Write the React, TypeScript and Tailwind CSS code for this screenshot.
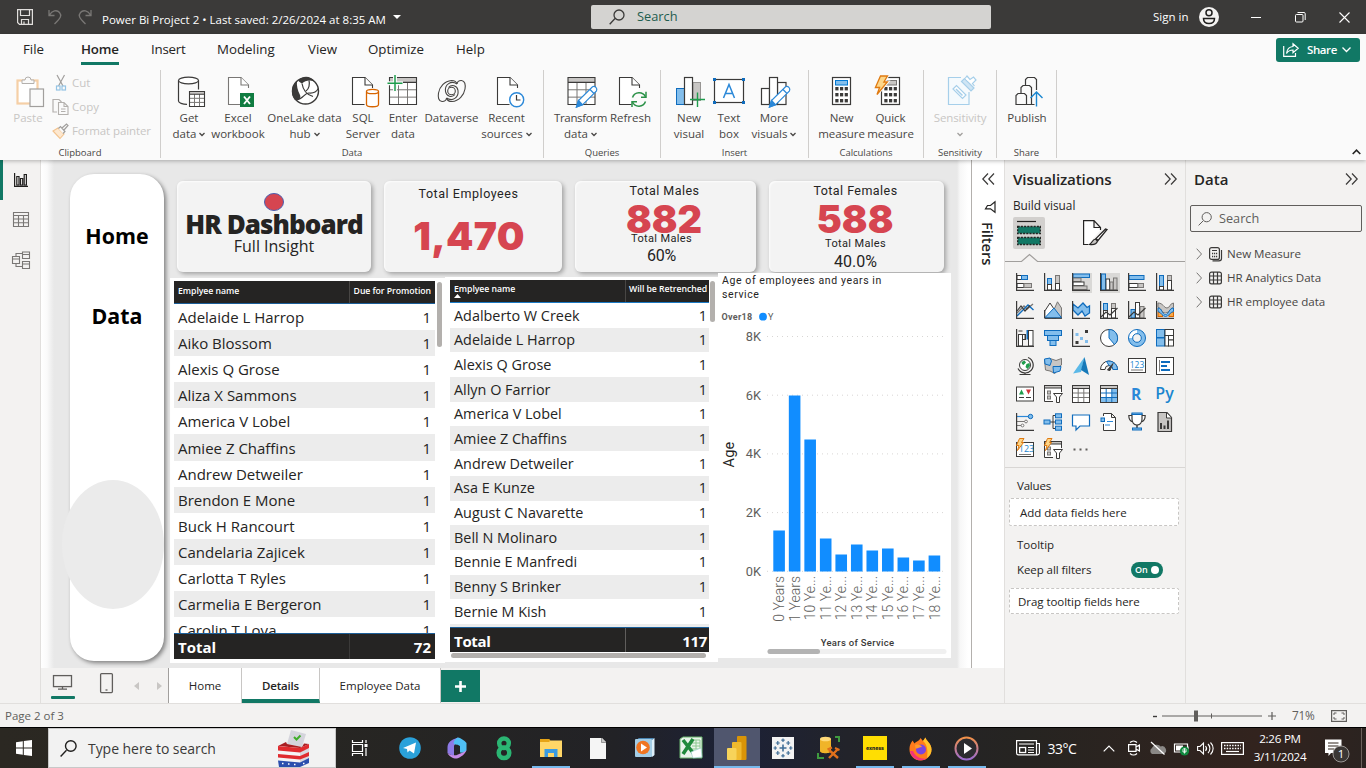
import React from "react";

type Kids = { children?: React.ReactNode };

const Svg = ({ w, h, children, className = "" }: { w: number; h: number; className?: string } & Kids) => (
  <svg width={w} height={h} viewBox={`0 0 ${w} ${h}`} fill="none" className={`shrink-0 overflow-visible ${className}`}>
    {children}
  </svg>
);

/* ---------- ribbon icons (32 x 32) ---------- */
const K = "#3b3a39";
const Doc = ({ x = 6.5, w = 20, color = K }: { x?: number; w?: number; color?: string }) => (
  <g stroke={color} strokeWidth="1.1" fill="#fff">
    <path d={`M${x + 12} 28.5H${x}V1.5H${x + w - 7.5}L${x + w} 9V12`} fill="#fff" />
    <path d={`M${x + w - 7.5} 1.5V9H${x + w}`} />
  </g>
);
const Grid = ({ x, y, s, n = 3 }: { x: number; y: number; s: number; n?: number }) => {
  const head = s / 5.5;
  const step = (s - head) / n;
  return (
    <g>
      <rect x={x} y={y} width={s} height={s} fill="#fff" />
      <rect x={x} y={y} width={s} height={head} fill="#c8c6c4" />
      {Array.from({ length: n - 1 }, (_, i) => (
        <path
          key={i}
          stroke="#797775"
          d={`M${x + ((i + 1) * s) / n} ${y + head}V${y + s}M${x} ${y + head + (i + 1) * step}H${x + s}`}
        />
      ))}
      <path stroke={K} strokeWidth="1.1" d={`M${x} ${y}h${s}v${s}h${-s}zM${x} ${y + head}h${s}`} />
    </g>
  );
};
const Pencil = () => (
  <g stroke="#2b88d8" strokeWidth="1.2">
    <path d="M11.5 31L13.5 24.5L27.5 10.8a3 3 0 0 1 4 4L17.5 28.8Z" fill="#fff" />
    <path d="M11.5 31L13.5 24.5L17.5 28.8Z" fill="#2b88d8" />
    <path d="M25 13.5l4 4" />
  </g>
);
const CalcBody = ({ display }: { display: string }) => (
  <g>
    <rect x="6.5" y="1.5" width="18" height="27" fill="#fff" stroke={K} strokeWidth="1.2" />
    <rect x="9.5" y="4.5" width="12" height="4.5" fill={display} stroke={display === "#c8c6c4" ? "#797775" : "#0078d4"} />
    {[11, 17, 23].map((y) => [9.3, 14, 18.7].map((x) => <rect key={`${x}-${y}`} x={x} y={y} width="3.2" height="3.4" fill={K} />))}
  </g>
);
const BOLT = "M5.5 0H12.5L8.9 6H12.4L2 18.5L4.6 11.5H0.4Z";

const ribbonIcons: Record<string, React.ReactNode> = {
  get: (
    <g transform="translate(2.5 0)">
      <g stroke={K} strokeWidth="1.2">
        <path d="M3 4.5V25c0 1.8 4 3.3 8.5 3.3M23 4.5V13.5" />
        <ellipse cx="13" cy="4.5" rx="10" ry="3.3" fill="#fff" />
      </g>
      <Grid x={14} y={15.5} s={15} />
    </g>
  ),
  excel: (
    <>
      <Doc color="#797775" />
      <rect x="18" y="17" width="14" height="14" fill="#107c41" />
      <path d="M22 20.5L28 28M28 20.5L22 28" stroke="#fff" strokeWidth="1.9" />
    </>
  ),
  onelake: (
    <>
      <circle cx="16.5" cy="15" r="13" fill="#fff" stroke={K} strokeWidth="1.4" />
      <path d="M8 5A13.5 13.5 0 0 0 5.500 23.5C9.5 25 12.500 23 11 19C8.500 14 7.5 10 8 5Z" fill={K} />
      <path d="M9.500 4.5C13 -.5 22 -.5 25.500 5.500C21 3.800 16 4.5 13 7.5C11 6.5 10 5.800 9.500 4.500Z" fill={K} />
      <path d="M13 7.5C14 14 17 18.500 24 20.500M6.5 23.500C14 24.500 15 16.5 20 17C24 17.500 27 16.500 29.300 12.500M20 4.5C21 8 20 13 17 15" stroke={K} strokeWidth="1.2" />
    </>
  ),
  sql: (
    <>
      <Doc x={5.5} />
      <g stroke="#d86500" strokeWidth="1.3" fill="#fff">
        <path d="M19.5 15.5V28.5c0 3 12 3 12 0V15.5" />
        <ellipse cx="25.5" cy="15.5" rx="6" ry="2.2" />
      </g>
    </>
  ),
  enter: (
    <>
      <Grid x={2.5} y={1.5} s={27} />
      <path d="M8 -1V15.5M0 7.2H16" stroke="#fafafa" strokeWidth="4" />
      <path d="M8 -1V15M0.5 7.2H15.5" stroke="#1f9d4d" strokeWidth="1.5" />
    </>
  ),
  dataverse: (
    <g stroke="#484644" strokeWidth="1.1">
      <circle cx="15.500" cy="15" r="3.800" />
      <path d="M21 8C15 4 8.500 8.500 9.500 15.500C10.300 20.500 16 22 19 18.500" />
      <path d="M10.500 22C16.500 26 23 21.500 22 14.500C21.200 9.500 15.500 8 12.500 11.500" />
      <path d="M21 8C21 6 23 4.300 25.500 4.500C29 5 29.700 8.500 29 13C28 19 23 25 16 25.500C13 25.500 11 24 10.500 22" />
      <path d="M10.500 22C10.500 24 8.500 25.700 6 25.500C2.500 25 1.800 21.500 2.500 17C3.500 11 8.500 5 15.500 4.500C18.500 4.500 20.500 6 21 8" />
    </g>
  ),
  recent: (
    <>
      <Doc />
      <circle cx="25.7" cy="23.7" r="7" fill="#fff" stroke="#2b88d8" strokeWidth="1.4" />
      <path d="M25.5 19V24H29.5" stroke={K} strokeWidth="1.2" />
    </>
  ),
  transform: (
    <>
      <Grid x={3} y={1.5} s={27} />
      <Pencil />
    </>
  ),
  refresh: (
    <>
      <Doc x={4.5} />
      <circle cx="24" cy="23.5" r="8.5" fill="#fafafa" />
      <g stroke="#2a9147" strokeWidth="1.5">
        <path d="M17.5 21.5A7 7 0 0 1 30.5 21M30.5 25.5A7 7 0 0 1 17.5 26" />
        <path d="M31 15.8V21.2H26M17 31V25.8H22" />
      </g>
    </>
  ),
  newvisual: (
    <>
      <rect x="3.5" y="12.5" width="8" height="16" fill="#83beec" stroke="#0f6cbd" />
      <rect x="20" y="6.5" width="7.5" height="18" fill="#c8c6c4" stroke="#979593" />
      <rect x="11.5" y="1.5" width="8" height="27" fill="#fff" stroke={K} strokeWidth="1.2" />
      <path d="M24.5 16.5V31M17 23.5H32" stroke="#1f9d4d" strokeWidth="1.4" />
    </>
  ),
  textbox: (
    <>
      <rect x="1.5" y="3.5" width="29" height="23" fill="#fff" stroke={K} strokeWidth="1.2" />
      {[0, 29].map((x) => [2, 25].map((y) => <rect key={`${x}-${y}`} x={x} y={y} width="3" height="3" fill="#0f6cbd" />))}
      <path d="M10.5 22L16 8.5L21.5 22M12.2 17.5H19.8" stroke="#2b88d8" strokeWidth="1.5" />
    </>
  ),
  more: (
    <>
      <g stroke={K} strokeWidth="1.2" fill="#fff">
        <rect x="3.5" y="12.5" width="8" height="16" />
        <rect x="19.5" y="6.5" width="8.5" height="22" />
        <rect x="11.5" y="1.5" width="8" height="27" />
      </g>
      <Pencil />
    </>
  ),
  measure: <CalcBody display="#83beec" />,
  quick: (
    <>
      <CalcBody display="#c8c6c4" />
      <path d={BOLT} fill="#ffd68a" stroke="#fafafa" strokeWidth="3" />
      <path d={BOLT} fill="#fcd68a" stroke="#e07a10" strokeWidth="1.3" />
    </>
  ),
  sensitivity: (
    <g stroke="#a6cfea" strokeWidth="1.2">
      <path d="M17 1.5H4.5V28.5H25V16" fill="#f5fafd" />
      <path d="M9 13L12.5 9.5L22 19L18.5 22.5Z" fill="#fff" />
      <path d="M12 13l6.5 6.5" strokeWidth="1.5" />
      <path d="M17.5 5.5L20.5 2.5L30 12L27 15Z" fill="#cfe5f4" />
      <path d="M21 2.500L23 0L26 3.5L29.5 1L32 4L28.5 7.5L30.5 10" fill="#fff" />
    </g>
  ),
  publish: (
    <>
      <g stroke={K} strokeWidth="1.2" fill="#fafafa">
        <path d="M14.5 28.5V3.5l2-2H23.5l2 2V14M25 28.5H14.5" />
        <path d="M10 28.5V11.5l2-2H18.5l2 2V28.5Z" />
        <path d="M5 28.5V19.5l2-2H13.5l2 2V28.5Z" />
      </g>
      <path d="M25.5 31V16" stroke="#fafafa" strokeWidth="4" />
      <path d="M25.5 30.5V16M19.5 22L25.5 16L31.5 22" stroke="#1a86cf" strokeWidth="1.4" />
    </>
  ),
};

const Caret = ({ className = "ml-[3px]" }: { className?: string }) => (
  <Svg w={6} h={5} className={`inline-block ${className}`}>
    <path d="M.5 1L3 3.5L5.5 1" stroke="currentColor" strokeWidth="1.3" />
  </Svg>
);

const RB = ({ icon, l1, l2, caret, cls, muted }: { icon: string; l1: string; l2?: string; caret?: boolean; cls: string; muted?: boolean }) => (
  <div className={`flex shrink-0 flex-col items-center text-[11.5px] leading-4 whitespace-nowrap ${muted ? "text-[#c8c6c4]" : "text-[#484644]"} ${cls}`}>
    <Svg w={32} h={32}>{ribbonIcons[icon]}</Svg>
    <div className={`mt-[2px] flex h-4 justify-center ${l1 === "Transform" ? "tracking-[-0.35px]" : ""}`}>{l1}</div>
    <div className="flex h-4 items-center justify-center">
      {l2}
      {caret && <Caret className={l2 ? "ml-[3px]" : "text-[#a19f9d]"} />}
    </div>
  </div>
);

const Group = ({ label, cls, children }: { label: string; cls: string } & Kids) => (
  <div className={`flex h-[88px] shrink-0 flex-col border-r border-[#d0cecc] ${cls}`}>
    <div className="flex h-[76px] shrink-0 pt-[6px]">{children}</div>
    <div className="shrink-0 text-center text-[9.5px] leading-[14px] tracking-[-0.05px] text-[#484644]">{label}</div>
  </div>
);

const tabs = [
  ["File", "w-[58px]"],
  ["Home", "w-[70px]"],
  ["Insert", "w-[66px]"],
  ["Modeling", "w-[91px]"],
  ["View", "w-[60px]"],
  ["Optimize", "w-[88px]"],
  ["Help", "w-[60px]"],
];

const TitleBar = () => (
  <div className="flex h-[34px] items-center bg-[#3b3a39] text-[12px] text-white">
    <div className="flex w-[102px] items-center pl-[17px]">
      <Svg w={16} h={16}>
        <g stroke="#e1dfdd" strokeWidth="1.2">
          <path d="M.6 .6H15.4V15.4H2.5L.6 13.5Z" />
          <path d="M3.5 1V6.5H12.5V1M4.5 15V10.5H11.5V15M7 12.5V15" />
        </g>
      </Svg>
      <Svg w={14} h={16} className="ml-[15px]">
        <path d="M1 1V6.5H6.5M1.5 6C4 1.5 9 .5 11.5 3.5C14 6.5 13 8.5 6.5 15" stroke="#797775" strokeWidth="1.3" />
      </Svg>
      <Svg w={14} h={16} className="ml-[16px]">
        <path d="M13 1V6.5H7.5M12.5 6C10 1.5 5 .5 2.5 3.5C0 6.5 1 8.5 7.5 15" stroke="#797775" strokeWidth="1.3" />
      </Svg>
    </div>
    <div className="w-[284px] pt-[6px] text-[11.5px] whitespace-nowrap">Power Bi Project 2 • Last saved: 2/26/2024 at 8:35 AM</div>
    <Svg w={8} h={4} className="ml-[7px]"><path d="M0 0H8L4 4Z" fill="#fff" /></Svg>
    <div className="ml-[190px] flex h-6 w-[400px] items-center rounded-[2px] bg-[#d4d3d1] text-[12.8px] text-[#1e5c4e]">
      <Svg w={16} h={16} className="mr-[12px] ml-[18px]">
        <path d="M.7 15.3L6 9.5" stroke="#3b3a39" strokeWidth="1.3" />
        <circle cx="10" cy="6" r="5" stroke="#3b3a39" strokeWidth="1.3" />
      </Svg>
      Search
    </div>
    <div className="ml-[162px] w-[46px] text-[11.5px] whitespace-nowrap">Sign in</div>
    <Svg w={20} h={20} className="mt-[-1px]">
      <circle cx="10" cy="10" r="10" fill="#f3f2f1" />
      <circle cx="10" cy="5.7" r="3" stroke="#201f1e" strokeWidth="1.5" />
      <path d="M4.5 11.5H15.5C15.5 14.5 13.5 16.5 10 16.5S4.5 14.5 4.5 11.5Z" stroke="#201f1e" strokeWidth="1.5" />
    </Svg>
    <Svg w={10} h={12} className="ml-[32px]"><path d="M0 6.5H10" stroke="#fff" /></Svg>
    <Svg w={11} h={11} className="mt-px ml-[34px]">
      <rect x=".5" y="2.5" width="7.5" height="7.5" rx="1" stroke="#fff" />
      <path d="M2.5 .5H9a1.200 1.200 0 0 1 1.200 1.200V8" stroke="#fff" />
    </Svg>
    <Svg w={11} h={11} className="mt-px ml-[33px]"><path d="M.5 .5L10.5 10.5M10.5 .5L.5 10.5" stroke="#fff" strokeWidth="1.1" /></Svg>
  </div>
);

const Ribbon = () => (
  <div className="relative z-10 h-[126px] bg-[#fafafa] shadow-[0_1px_4px_rgba(0,0,0,0.28)]">
    <div className="flex h-8 items-center">
      <div className="flex flex-1 pl-[23px] text-[13.3px] text-[#252423]">
        {tabs.map(([t, w]) => (
          <div key={t} className={`relative flex h-8 items-center ${w}`}>
            {t === "Home" ? (
              <>
                <span className="font-semibold tracking-[-0.2px]">Home</span>
                <i className="absolute bottom-[1px] left-0 h-[3px] w-[38px] bg-[#117865]" />
              </>
            ) : (
              <span className={t === "Insert" ? "tracking-[-0.2px]" : ""}>{t}</span>
            )}
          </div>
        ))}
      </div>
      <div className="mr-[6px] flex h-6 w-[84px] items-center rounded-[3px] bg-[#117865] text-[11.5px] font-semibold text-white">
        <Svg w={16} h={14} className="mr-[8px] ml-[7px]">
          <g stroke="#fff" strokeWidth="1.2">
            <path d="M.7 3V13.3H12.5V10" />
            <path d="M10 .7L15.2 5.2L10 9.7V7C7 7 5 8 3.5 10.5C4 6.5 6 3.8 10 3.5Z" />
          </g>
        </Svg>
        <span className="tracking-[-0.4px]">Share</span>
        <Svg w={9} h={6} className="ml-[5px]"><path d="M.5 .5L4.5 4.5L8.5 .5" stroke="#fff" strokeWidth="1.3" /></Svg>
      </div>
    </div>
    <div className="flex h-[92px] items-start pt-[4px]">
      <div className="flex h-[88px] w-[161px] flex-col border-r border-[#d0cecc] text-[#c8c6c4]">
        <div className="flex h-[76px] shrink-0 text-[11.5px]">
          <div className="ml-[12px] flex w-8 flex-col items-center pt-[6px] leading-4">
            <Svg w={32} h={32}>
              <rect x="5.5" y="4.5" width="20" height="23" fill="#fff" stroke="#f5cfa6" strokeWidth="2.2" />
              <path d="M10 7.5V4H13a3 3 0 0 1 6 0h3v3.5Z" fill="#fafafa" stroke="#b3b0ad" />
              <rect x="18" y="13" width="13.5" height="17.5" fill="#fafafa" stroke="#a19f9d" strokeWidth="1.2" />
            </Svg>
            <span className="mt-[2px]">Paste</span>
          </div>
          <div className="ml-[8px] flex flex-col pt-px">
            <div className="flex h-6 items-center gap-[3px]">
              <Svg w={17} h={16}>
                <path d="M5 0L11 11M12.5 0L6.5 11" stroke="#a19f9d" strokeWidth="1.2" />
                <rect x="4.5" y="11" width="3.5" height="4" stroke="#94c4e4" strokeWidth="1.2" />
                <rect x="10" y="11" width="3.5" height="4" stroke="#94c4e4" strokeWidth="1.2" />
              </Svg>
              Cut
            </div>
            <div className="flex h-6 items-center gap-[3px]">
              <Svg w={17} h={16}>
                <path d="M5 13H1V.5H7L9.5 3" stroke="#b3b0ad" strokeWidth="1.2" />
                <path d="M6.5 3.5H12L16 7.5V15.5H6.5ZM12 3.5V7.5H16M9 10H13.5M9 12.5H13.5" stroke="#b3b0ad" strokeWidth="1.1" fill="#fafafa" />
              </Svg>
              Copy
            </div>
            <div className="flex h-6 items-center gap-[3px] tracking-[-0.1px] whitespace-nowrap">
              <Svg w={17} h={15}>
                <path d="M1 7L6 4L12 10L8 14.5Z" fill="#fde8d0" stroke="#f3c38e" strokeWidth="1.1" />
                <path d="M6.5 4.5L8.5 2.5L13 7.5L11 9.5M10 4L14.5 0L16 1.5L12 6" stroke="#a19f9d" strokeWidth="1.2" fill="#fafafa" />
              </Svg>
              Format painter
            </div>
          </div>
        </div>
        <div className="shrink-0 text-center text-[9.5px] leading-[14px] text-[#484644]">Clipboard</div>
      </div>
      <Group label="Data" cls="w-[383px]">
        <RB icon="get" l1="Get" l2="data" caret cls="ml-[4px] w-[48px]" />
        <RB icon="excel" l1="Excel" l2="workbook" cls="w-[50px]" />
        <RB icon="onelake" l1="OneLake data" l2="hub" caret cls="w-[83px]" />
        <RB icon="sql" l1="SQL" l2="Server" cls="w-[34px]" />
        <RB icon="enter" l1="Enter" l2="data" cls="w-[46px]" />
        <RB icon="dataverse" l1="Dataverse" cls="w-[51px]" />
        <RB icon="recent" l1="Recent" l2="sources" caret cls="w-[59px]" />
      </Group>
      <Group label="Queries" cls="w-[117px]">
        <RB icon="transform" l1="Transform" l2="data" caret cls="ml-[8px] w-[57px]" />
        <RB icon="refresh" l1="Refresh" cls="w-[43px]" />
      </Group>
      <Group label="Insert" cls="w-[148px]">
        <RB icon="newvisual" l1="New" l2="visual" cls="ml-[8px] w-[40px]" />
        <RB icon="textbox" l1="Text" l2="box" cls="w-[40px]" />
        <RB icon="more" l1="More" l2="visuals" caret cls="w-[50px]" />
      </Group>
      <Group label="Calculations" cls="w-[115px]">
        <RB icon="measure" l1="New" l2="measure" cls="ml-[8px] w-[49px] tracking-[-0.1px]" />
        <RB icon="quick" l1="Quick" l2="measure" cls="w-[49px] tracking-[-0.1px]" />
      </Group>
      <Group label="Sensitivity" cls="w-[73px]">
        <RB icon="sensitivity" l1="Sensitivity" caret muted cls="w-[72px] tracking-[-0.1px]" />
      </Group>
      <Group label="Share" cls="w-[60px]">
        <RB icon="publish" l1="Publish" cls="w-[60px]" />
      </Group>
      <Svg w={9} h={6} className="mt-[79px] mr-[5px] ml-auto"><path d="M.7 5L4.5 1.2L8.3 5" stroke="#252423" strokeWidth="1.6" /></Svg>
    </div>
  </div>
);

const NavRail = () => (
  <div className="flex w-[41px] shrink-0 flex-col border-r border-[#e1dfdd] bg-[#f3f2f1]">
    <div className="flex h-10 items-center border-l-3 border-[#117865] pl-[11px]">
      <Svg w={14} h={14}>
        <path d="M.6 0V13.4H14M2.8 12V3.5H5V12ZM6.5 12V5.5H8.7V12ZM10.2 12V1.5H12.4V12Z" stroke="#201f1e" strokeWidth="1.2" />
      </Svg>
    </div>
    <div className="flex h-10 items-center pb-px pl-[13px]">
      <Svg w={16} h={15}>
        <path d="M.5 .5H15.5V14.5H.5ZM.5 3.5H15.5M.5 7H15.5M.5 10.7H15.5M5.5 3.5V14.5M10.5 3.5V14.5" stroke="#797775" strokeWidth="1.1" />
      </Svg>
    </div>
    <div className="flex h-10 items-center pl-[12px]">
      <Svg w={18} h={18}>
        <path d="M.5 5.5H7.5V12.5H.5ZM.5 8H7.5M10.5 1H17.5V7.5H10.5ZM10.5 3.5H17.5M10.5 10.5H17.5V17.5H10.5ZM10.5 13H17.5M4 5.5V2.5H10.5M4 12.5V15.5H10.5" stroke="#797775" strokeWidth="1.1" />
      </Svg>
    </div>
  </div>
);

const promoted = ["Adelaide L Harrop", "Aiko Blossom", "Alexis Q Grose", "Aliza X Sammons", "America V Lobel", "Amiee Z Chaffins", "Andrew Detweiler", "Brendon E Mone", "Buck H Rancourt", "Candelaria Zajicek", "Carlotta T Ryles", "Carmelia E Bergeron", "Carolin T Loya"];
const retrenched = ["Adalberto W Creek", "Adelaide L Harrop", "Alexis Q Grose", "Allyn O Farrior", "America V Lobel", "Amiee Z Chaffins", "Andrew Detweiler", "Asa E Kunze", "August C Navarette", "Bell N Molinaro", "Bennie E Manfredi", "Benny S Brinker", "Bernie M Kish"];

const CARD = "flex h-[91px] shrink-0 flex-col items-center rounded-[6px] bg-[#f3f3f3] text-[#252423] shadow-[2px_2px_4px_rgba(0,0,0,0.3),inset_1px_1px_2px_rgba(255,255,255,0.8)] whitespace-nowrap";
const DIN = "font-['Roboto',sans-serif]";
const BIG = "font-['Inter',sans-serif] font-black text-[#d64550]";

const bars = [41, 176, 132, 33, 17, 27, 21, 23, 14, 11, 16];
const years = ["0 Years", "1 Years", "10 Ye...", "11 Ye...", "12 Ye...", "13 Ye...", "14 Ye...", "15 Ye...", "16 Ye...", "17 Ye...", "18 Ye..."];

const Chart = () => (
  <div className="h-[385px] w-[233px] shrink-0 bg-white">
    <svg width="233" height="385" viewBox="0 0 233 385" className={DIN}>
      <g fill="#252423" fontSize="10.5" letterSpacing=".6">
        <text x="4" y="11">Age of employees and years in</text>
        <text x="4" y="25">service</text>
      </g>
      <text x="3.5" y="47" fontSize="9" fontWeight="700" fill="#605e5c" letterSpacing=".3">Over18</text>
      <circle cx="45" cy="43.7" r="3.9" fill="#118dff" />
      <text x="50" y="47" fontSize="9" fill="#605e5c">Y</text>
      {["8K", "6K", "4K", "2K", "0K"].map((t, i) => (
        <g key={t}>
          <path d={`M49 ${63.5 + i * 58.7}H228`} stroke="#d8d6d4" strokeDasharray="1 4" />
          <text x="43" y={68 + i * 58.7} textAnchor="end" fontSize="12.8" fill="#605e5c">{t}</text>
        </g>
      ))}
      {bars.map((h, i) => (
        <rect key={i} x={55.3 + i * 15.53} y={298.5 - h} width="11.6" height={h} fill="#118dff" />
      ))}
      {years.map((t, i) => (
        <text key={t} transform={`translate(${66.2 + i * 15.53} 303) rotate(-90)`} textAnchor="end" fontSize="14" fill="#605e5c" fontWeight="300">{t}</text>
      ))}
      <text transform="translate(16 181.5) rotate(-90)" textAnchor="middle" fontSize="14.5" letterSpacing=".3" fill="#252423">Age</text>
      <text x="139.5" y="373" textAnchor="middle" fontSize="9.5" fontWeight="500" fill="#3b3a39" letterSpacing=".3">Years of Service</text>
      <rect x="49.5" y="376" width="179" height="5" rx="2.5" fill="#f0f0f0" />
      <rect x="49.5" y="376" width="52.5" height="5" rx="2.5" fill="#b3b3b3" />
    </svg>
  </div>
);

const Canvas = () => (
  <div className="flex h-[508px] w-[930px] overflow-hidden bg-[linear-gradient(to_right,#ffffff_0px,#fafafa_6px,#e8e8e8_13px,#e8e8e8_916px,#f7f7f7_919px,#ffffff_927px)] pl-[29px]">
    <div className="relative mt-[14px] h-[487px] w-[94px] shrink-0 rounded-[24px] bg-white text-center text-[21.4px] font-bold text-black shadow-[2px_2px_4px_rgba(0,0,0,0.45)]">
      <div className="absolute top-[306px] left-[-8px] h-[129px] w-[102px] rounded-[50%] bg-[#ebebeb]" />
      <div className="mt-[47px] h-[30px] leading-[30px]">Home</div>
      <div className="mt-[50px] h-[30px] leading-[30px]">Data</div>
    </div>
    <div className="ml-[6px] flex flex-col">
      <div className="flex h-[113px] pt-[21px] pl-[7px]">
        <div className={`${CARD} w-[194px]`}>
          <Svg w={20} h={18} className="mt-[12px]"><ellipse cx="10" cy="9" rx="9.5" ry="8.5" fill="#d64550" stroke="#4a5fb0" /></Svg>
          <div className="h-[26px] text-[26px] leading-[26px] font-extrabold tracking-[-0.95px]">HR Dashboard</div>
          <div className="h-[18px] text-[16px] leading-[18px]">Full Insight</div>
        </div>
        <div className={`${CARD} ml-[13px] w-[178px]`}>
          <div className={`${DIN} mt-[5px] ml-[-9px] text-[12.5px] leading-4 tracking-[0.55px]`}>Total Employees</div>
          <div className={`${BIG} mt-[14px] ml-[-8px] text-[39px] leading-[40px] tracking-[0.3px]`}>1,470</div>
        </div>
        <div className={`${CARD} ml-[13px] w-[181px]`}>
          <div className={`${DIN} mt-[2px] ml-[-2px] text-[12.5px] leading-4 tracking-[0.45px]`}>Total Males</div>
          <div className={`${BIG} ml-[-3px] h-[32px] text-[38px] leading-[40px]`}>882</div>
          <div className={`${DIN} ml-[-8px] text-[11px] leading-[15px] tracking-[0.35px]`}>Total Males</div>
          <div className={`${DIN} ml-[-8px] text-[16px] leading-[20px] tracking-[-0.2px]`}>60%</div>
        </div>
        <div className={`${CARD} ml-[13px] w-[175px]`}>
          <div className={`${DIN} mt-[2px] ml-[-2px] text-[12.5px] leading-4 tracking-[0.45px]`}>Total Females</div>
          <div className={`${BIG} ml-[-3px] h-[37px] text-[38px] leading-[40px]`}>588</div>
          <div className={`${DIN} ml-[-2px] text-[11px] leading-[15px] tracking-[0.35px]`}>Total Males</div>
          <div className={`${DIN} ml-[-2px] text-[16px] leading-[22px]`}>40.0%</div>
        </div>
      </div>
      <div className="flex items-start">
        <div className="mt-[5px] flex h-[385px] w-[275px] bg-white pt-[3px] pl-[4px]">
          <div className="w-[261px]">
            <div className="flex h-[23px] border-b border-[#1c5f99] bg-[#252423] text-[8.7px] leading-[20px] font-semibold text-white">
              <div className="flex-1 border-r border-[#484644] pl-[4px] tracking-[-0.05px]">Emplyee name</div>
              <div className="w-[85px] pr-[4px] text-right tracking-[-0.05px] whitespace-nowrap">Due for Promotion</div>
            </div>
            <div className="h-[328.500px] overflow-hidden text-[15px] text-[#252423]">
              {promoted.map((n) => (
                <div key={n} className="flex h-[26.1px] items-center justify-between px-[4px] leading-[26px] even:bg-[#ececec]">
                  <span>{n}</span>
                  <span>1</span>
                </div>
              ))}
            </div>
            <div className="flex h-[26px] border-t border-[#1c5f99] bg-[#252423] text-[15px] leading-[27px] font-bold text-white">
              <div className="flex-1 border-r border-[#3b3a39] pl-[4px]">Total</div>
              <div className="w-[85px] pr-[4px] text-right">72</div>
            </div>
          </div>
          <div className="mt-px ml-[2px] h-[65px] w-[5px] rounded-full bg-[#b3b0ad]" />
        </div>
        <div className="mt-[4px] h-[385px] w-[273px] bg-white pt-[3px] pl-[5px]">
          <div className="flex">
            <div className="w-[259px]">
              <div className="relative flex h-[23px] border-b border-[#1c7ac4] bg-[#252423] text-[8.7px] leading-[19px] font-semibold text-white">
                <div className="flex-1 border-r border-[#484644] pl-[4px] tracking-[-0.05px]">Emplyee name</div>
                <div className="w-[83px] pr-[2px] text-right tracking-[-0.05px] whitespace-nowrap">Will be Retrenched</div>
                <Svg w={7} h={4} className="absolute bottom-[4px] left-[4px]"><path d="M0 4H7L3.5 0Z" fill="#fff" /></Svg>
              </div>
              <div className="h-[324px] overflow-hidden bg-white text-[14.4px] text-[#252423]">
                {[...retrenched, ""].map((n) => (
                  <div key={n} className="flex h-[24.7px] items-center justify-between pr-[2px] pl-[4px] leading-[24.7px] even:bg-[#ececec]">
                    <span className="pt-px">{n}</span>
                    <span className="pt-px">{n && "1"}</span>
                  </div>
                ))}
              </div>
              <div className="flex h-[25px] border-t border-[#1c5f99] bg-[#252423] text-[15px] leading-[26px] font-bold text-white">
                <div className="flex-1 border-r border-[#605e5c] pl-[4px] tracking-[-0.3px]">Total</div>
                <div className="w-[83px] pr-[2px] text-right tracking-[-0.3px]">117</div>
              </div>
            </div>
            <div className="mt-px ml-px h-[41px] w-[5px] rounded-full bg-[#b3b0ad]" />
          </div>
          <div className="mt-px ml-px h-[5px] w-[255px] rounded-full bg-[#b3b0ad]" />
        </div>
        <Chart />
      </div>
    </div>
  </div>
);

const SheetTabs = () => (
  <div className="flex h-[35px] items-start bg-[#f3f2f1] text-[11.5px] text-[#252423]">
    <div className="flex w-[34px] flex-col items-end pt-[7px]">
      <Svg w={24} h={24}>
        <rect x="2.5" y=".6" width="18" height="11" stroke="#605e5c" strokeWidth="1.3" />
        <path d="M11.5 12V13.7M7 14.2H16" stroke="#605e5c" strokeWidth="1.3" />
        <rect x="0" y="21" width="24" height="3" rx="1" fill="#117865" />
      </Svg>
    </div>
    <Svg w={13} h={21} className="mt-[5px] ml-[25px]">
      <rect x=".6" y=".6" width="11.8" height="19" rx="1" stroke="#605e5c" strokeWidth="1.3" />
      <path d="M5.5 17H7.5" stroke="#605e5c" strokeWidth="1.3" />
    </Svg>
    <Svg w={5} h={8} className="mt-[14px] ml-[21px]"><path d="M5 0V8L0 4Z" fill="#c8c6c4" /></Svg>
    <Svg w={5} h={8} className="mt-[14px] ml-[18px]"><path d="M0 0V8L5 4Z" fill="#c8c6c4" /></Svg>
    <div className="ml-[6px] flex h-[35px] border-l border-[#a19f9d] leading-[35px]">
      <div className="w-[73px] border-r border-[#c8c6c4] bg-white text-center">Home</div>
      <div className="w-[78px] border-r border-b-4 border-[#c8c6c4] border-b-[#117865] bg-white text-center font-semibold tracking-[-0.2px]">Details</div>
      <div className="w-[121px] border-r border-[#c8c6c4] bg-white text-center">Employee Data</div>
    </div>
    <div className="mt-[2px] flex h-8 w-[39px] items-center justify-center bg-[#117865]">
      <Svg w={11} h={11}><path d="M5.5 0V11M0 5.5H11" stroke="#fff" strokeWidth="2.6" /></Svg>
    </div>
  </div>
);

const FiltersPane = () => (
  <div className="flex w-[33px] shrink-0 flex-col">
    <div className="flex h-[508px] flex-col items-center border-l border-[#b3b0ad] bg-white">
      <Svg w={13} h={12} className="mt-[13px]"><path d="M6 .5L.8 6L6 11.5M12 .5L6.8 6L12 11.5" stroke="#3b3a39" strokeWidth="1.2" /></Svg>
      <Svg w={12} h={12} className="mt-[16px] ml-[3px]"><path d="M11 .8V11.2L6.5 7.8H1.5L3.5 4.5H6.5Z" stroke="#252423" strokeWidth="1.2" /></Svg>
      <div className="mt-[9px] text-[14.8px] leading-[20px] font-semibold tracking-[-0.1px] text-[#252423] [writing-mode:vertical-rl]">Filters</div>
    </div>
    <div className="h-[35px] bg-[#f3f2f1]" />
  </div>
);

/* ---------- visual gallery (18 x 18) ---------- */
const B = "#83beec";
const D = "#0f6cbd";
const G = "#c8c6c4";
const S = "#797775";
const Axis = () => <path d="M.6 0V17.4H18" stroke={K} strokeWidth="1.2" />;
const R = ({ x, y, w, h, f = "#fff", s = K }: { x: number; y: number; w: number; h: number; f?: string; s?: string }) => (
  <rect x={x} y={y} width={w} height={h} fill={f} stroke={s} />
);
const SBOLT = "M3.5 -2.5H8L5.5 1.5H7.5L1.5 9.5L3 4.5H.5Z";
const SlicerIcon = () => (
  <>
    <path d="M9 16.5H.5V.5H17.5V7" fill="#fff" stroke={K} />
    <R x={0.5} y={0.5} w={17} h={2.5} f={G} />
    <R x={3.5} y={6} w={3} h={3} f={G} s={S} />
    <R x={3.5} y={11} w={3} h={3} f={G} s={S} />
    <path d="M9.5 8.5H18.5L15.5 12V17.5H12.5V12Z" fill="#fff" stroke={K} />
  </>
);

const visuals: React.ReactNode[] = [
  <><R x={1} y={2.5} w={5} h={4} /><R x={5.5} y={2.5} w={6} h={4} f={B} s={D} /><R x={1} y={10.5} w={7} h={4} /><R x={8} y={10.5} w={7.5} h={4} f={G} s={S} /><Axis /></>,
  <><R x={3.5} y={5.5} w={4} h={6} f={B} s={D} /><R x={3.5} y={11.5} w={4} h={5.5} /><R x={11.5} y={2.5} w={4} h={8} f={G} s={S} /><R x={11.5} y={10.5} w={4} h={6.5} /><Axis /></>,
  <><R x={1} y={1} w={16.5} h={3.5} f={B} s={D} /><R x={1} y={5} w={8} h={3.5} f={G} s={S} /><R x={1} y={9} w={11} h={3.5} /><R x={1} y={13} w={14} h={3.5} f={G} s={S} /><Axis /></>,
  <><R x={1.5} y={1} w={4} h={16} f={B} s={D} /><R x={6} y={6} w={3.5} h={11} /><R x={10} y={9} w={3} h={8} f={G} s={S} /><R x={13.5} y={5} w={3.5} h={12} f={G} s={S} /><Axis /></>,
  <><R x={1} y={2.5} w={15} h={4} f={B} s={D} /><R x={1} y={10.5} w={9} h={4} /><R x={10} y={10.5} w={5.5} h={4} f={G} s={S} /><Axis /></>,
  <><R x={3.5} y={2.5} w={4} h={11} f={B} s={D} /><R x={3.5} y={13.5} w={4} h={3.5} /><R x={11.5} y={2.5} w={4} h={5} f={G} s={S} /><R x={11.5} y={7.5} w={4} h={9.5} /><Axis /></>,
  <><path d="M1 12L8 5L11 8L17 3" stroke={S} strokeWidth="1.4" /><path d="M1 15L12 4L17.5 9" stroke={D} strokeWidth="1.4" /><path d="M1 10L5 5L9 10L14 4.5" stroke={K} strokeWidth="1.2" /><Axis /></>,
  <><path d="M8 13L13.5 .8L17.5 7V17H8Z" fill={G} stroke={S} /><path d="M.8 10L6 2L12 11V17H.8Z" fill="#fff" stroke={K} /><path d="M.8 16.8L10 7L17.5 16.8Z" fill={B} stroke={D} /><path d="M.5 17.3H18M.6 9V17" stroke={K} /></>,
  <><path d="M1 3L6 7L11 2L15 6.5L17.5 5V12L13 15L10 10L6 14L1 9Z" fill={B} stroke={D} strokeWidth="1.3" /><Axis /></>,
  <><R x={3.5} y={2.5} w={4} h={7} f={B} s={D} /><R x={3.5} y={9.5} w={4} h={7.5} /><R x={11.5} y={2.5} w={4} h={5} f={G} s={S} /><R x={11.5} y={7.5} w={4} h={9.5} /><path d="M1 16L6 11L10 14L17.5 7" stroke={K} strokeWidth="1.2" /><Axis /></>,
  <><R x={3} y={8.5} w={4} h={8.5} f={B} s={D} /><R x={7.5} y={1.5} w={4} h={15.5} /><R x={12} y={5.5} w={4} h={11.5} f={G} s={S} /><path d="M1 16L6 11L10 14L17.5 7" stroke={K} strokeWidth="1.2" /><Axis /></>,
  <><path d="M2 2C7 2 8 7 11 7S14 2 17.5 2V6.5C14 6.5 14 12 9.5 12S6 7 2 6.5Z" fill={G} stroke={S} /><R x={2} y={11} w={4.5} h={4.5} f="#f8a848" s="#d86500" /><R x={13} y={11} w={4.5} h={4.5} f="#f8a848" s="#d86500" /><path d="M2 7C6 7 6 13.5 9.5 13.5S13 7 17.5 7V10.5C14 11 13 15.5 9.5 15.5S5 11 2 10.5Z" fill={B} stroke={D} /><Axis /></>,
  <><R x={2.5} y={5.5} w={4} h={11.5} /><R x={6.5} y={5.5} w={3} h={5} /><path d="M11.500 1V10.500" stroke={D} strokeWidth="2" /><path d="M2.500 2H6.500M9 11V5.500" stroke={K} /><R x={12.5} y={1.5} w={4.5} h={15.5} /><Axis /></>,
  <><R x={0.5} y={1.5} w={17} h={5} f={B} s={D} /><R x={3.5} y={6.5} w={11} h={5} f={B} s={D} /><R x={6} y={11.5} w={6} h={5} f={B} s={D} /></>,
  <><rect x="3.5" y="4" width="3" height="3" fill={B} /><rect x="13" y="1" width="3" height="3" fill={K} /><rect x="8" y="8" width="3" height="3" fill={B} /><rect x="13" y="11" width="3" height="3" fill={B} /><rect x="3.5" y="12" width="3" height="3" fill={K} /><Axis /></>,
  <><circle cx="9" cy="9" r="8.5" fill="#fff" stroke={K} /><path d="M9 9V.5A8.5 8.5 0 0 1 14.5 15.5Z" fill={B} stroke={D} /></>,
  <><circle cx="9" cy="9" r="6.3" stroke={B} strokeWidth="4.5" /><path d="M9 .5V4.5A4.5 4.5 0 0 0 4.500 9H.5A8.5 8.5 0 0 1 9 .5Z" fill="#fff" /><circle cx="9" cy="9" r="8.5" stroke={D} /><circle cx="9" cy="9" r="4.3" fill="#f3f2f1" stroke={D} /></>,
  <><R x={0.5} y={0.5} w={8} h={8} f={B} s={D} /><R x={0.5} y={9} w={8} h={8} f={B} s={D} /><R x={9} y={0.5} w={8.5} h={6} /><R x={9} y={6.5} w={3.5} h={10.5} /><R x={12.5} y={6.5} w={5} h={4.5} /><R x={12.5} y={11} w={5} h={6} /></>,
  <><circle cx="9" cy="8" r="5.5" fill="#fff" stroke={K} /><path d="M5.500 5L8.500 3.500L10 5.5L7.500 8L6 7ZM10.500 7L13.500 6L14 9L11.500 12L9.500 10Z" fill="#1f9d4d" /><path d="M12 .5A8 8 0 1 1 2 11.5M9 15.5V17.5M3.500 17.5H14.500" stroke={K} strokeWidth="1.2" /></>,
  <><path d="M.5 3L6 1.5L12 3.5L17.5 1.5V8L13 11L11 16.5L6 14L1.5 13Z" fill={G} stroke={S} /><path d="M.5 2L6 1L7.5 4L6 8.5L1 7Z" fill={B} stroke={D} /><path d="M9 9.500H17L16 14L9.5 16Z" fill={B} stroke={D} /></>,
  <><path d="M12.5 0L9 15L1 16.5Z" fill="#5bb9e8" /><path d="M12.5 0L17 18L9 13Z" fill="#1679b8" /></>,
  <><path d="M.5 12.5A8.5 8.5 0 0 1 17.5 12.5H13A4 4 0 0 0 5 12.5Z" fill="#fff" stroke={K} /><path d="M6.5 4.5A8.5 8.5 0 0 1 17.5 12.5H13A4 4 0 0 0 9 8.5Z" fill={B} stroke={D} /><path d="M7.5 13L13 6.500L10 13.5Z" fill={K} stroke={K} /></>,
  <><R x={0.5} y={1.5} w={17} h={14} /><text x="9" y="10.8" textAnchor="middle" fontSize="8.5" fill="#1a86cf" fontFamily="Open Sans">123</text><path d="M3 13H15" stroke={S} /></>,
  <><R x={0.5} y={0.5} w={17} h={17} /><path d="M3.5 3V14.5" stroke={S} /><path d="M5 5H14M5 9H11M5 13H14" stroke={D} strokeWidth="1.8" /></>,
  <><R x={0.5} y={2} w={17} h={14} /><path d="M5.5 4.5L8 9.5H3Z" fill="#1f9d4d" /><path d="M12.5 9.5L15 4.5H10Z" fill="#d13438" /><path d="M3 12.5H8M10 12.5H15" stroke={K} /></>,
  <SlicerIcon />,
  <><R x={0.5} y={0.5} w={17} h={17} /><R x={0.5} y={0.5} w={17} h={3} f={G} /><path d="M6.2 4V17M11.8 4V17M1 8H17M1 12.5H17" stroke={S} /></>,
  <><R x={0.5} y={0.5} w={17} h={17} /><rect x="12" y="4" width="5.5" height="13" fill={B} /><rect x="1" y="12.5" width="16" height="4.5" fill={B} /><R x={0.5} y={0.5} w={17} h={3} f={G} /><path d="M6.2 4V17M11.8 4V17M1 8H17M1 12.5H17" stroke={D} /><path d="M.5 .5H17.5V17.5H.5Z" stroke={K} /></>,
  <text x="8" y="14.5" textAnchor="middle" fontSize="15.5" fontWeight="700" fill="#2b88d8" fontFamily="Open Sans">R</text>,
  <text x="8.500" y="14" textAnchor="middle" fontSize="16" fontWeight="600" fill="#1a86cf" fontFamily="Open Sans">Py</text>,
  <><path d="M1 3.5H13" stroke="#2b88d8" strokeWidth="1.2" /><circle cx="14.5" cy="3.5" r="2.2" fill={B} stroke={D} /><path d="M1 8.5H9M1 12.5H6" stroke={S} /><circle cx="10" cy="8.5" r="1.4" fill="#fff" stroke={S} /><circle cx="6.5" cy="12.5" r="1.4" fill="#fff" stroke={S} /><Axis /></>,
  <><path d="M6 9H12M9 2.500V15.5M9 2.5H12M9 15.5H12" stroke={K} /><R x={0} y={7} w={6} h={4} f={B} s={D} /><R x={11.5} y={0.8} w={6} h={4} f={B} s={D} /><R x={11.5} y={7} w={6} h={4} f={B} s={D} /><R x={11.5} y={13.2} w={6} h={4} f={B} s={D} /></>,
  <path d="M.5 2H17.5V13H8L4 17V13H.5Z" fill="#fff" stroke={D} strokeWidth="1.2" />,
  <><path d="M3.5 3V.5H11.5L15.5 4.5V17.5H3.5V11M11.5 .5V4.5H15.5" fill="#fff" stroke={K} /><R x={1} y={5} w={3.5} h={3.5} f={B} s={D} /><path d="M7 8.5H13M5 12H10" stroke="#2b88d8" strokeWidth="1.2" /></>,
  <><path d="M4 1H14V6C14 10 11.5 12 9 12S4 10 4 6ZM4 2.5H.8C.8 7 2.5 8.5 5 9M14 2.5H17.2C17.2 7 15.5 8.5 13 9" stroke={K} strokeWidth="1.2" fill="#fff" /><path d="M9 12V15" stroke={K} strokeWidth="1.5" /><R x={4.5} y={15} w={9} h={2} f={B} s={D} /><R x={4} y={0} w={10} h={1.5} f={B} s={D} /></>,
  <><path d="M2 -.5H11L15.500 4.5V18.5H2Z" fill={G} stroke={K} strokeWidth="1.2" /><path d="M10.500 0V5H15.500" stroke={K} fill="#fff" /><rect x="4" y="10" width="2" height="6" fill={K} /><rect x="7.500" y="12.5" width="2" height="3.5" fill={K} /><rect x="11" y="7.5" width="2" height="8.5" fill={K} /></>,
  <><R x={0.5} y={1.5} w={17} h={14} /><text x="10.5" y="11" textAnchor="middle" fontSize="9" fill="#1a86cf" fontFamily="Open Sans">123</text><path d="M3 13.5H15" stroke={S} /><path d={SBOLT} fill="#fcd68a" stroke="#e07a10" /></>,
  <><SlicerIcon /><path d={SBOLT} fill="#fcd68a" stroke="#e07a10" /></>,
  <>{[1.500, 7.500, 13.500].map((x) => <rect key={x} x={x} y="7.5" width="2" height="2" fill="#605e5c" />)}</>,
];

const Chevrons = ({ className = "" }: { className?: string }) => (
  <Svg w={13} h={12} className={className}><path d="M1 .5L6.2 6L1 11.5M7 .5L12.2 6L7 11.5" stroke="#3b3a39" strokeWidth="1.2" /></Svg>
);

const VizPane = () => (
  <div className="flex w-[182px] shrink-0 flex-col border-x border-[#e1dfdd] bg-[#f3f2f1] text-[11.8px] text-[#252423]">
    <div className="flex h-[38px] items-center pr-[8px] pl-[8px] text-[15.2px] font-semibold text-[#252423]">
      <span className="tracking-[-0.15px]">Visualizations</span>
      <Chevrons className="ml-auto" />
    </div>
    <div className="h-[19px] pl-[8px] text-[11.8px] leading-[15px] font-medium">Build visual</div>
    <div className="flex h-8 pl-[8px]">
      <div className="flex h-8 w-8 items-center justify-center rounded-[2px] bg-[#d2d0ce]">
        <Svg w={24} h={25}>
          <path d="M0 .5H19" stroke="#252423" strokeWidth="1.2" />
          <rect x=".7" y="5.5" width="22.6" height="7" fill="#117865" stroke="#252423" strokeWidth="1.4" strokeDasharray="2 1.2" />
          <rect x=".7" y="16.5" width="22.6" height="7" fill="#117865" stroke="#252423" strokeWidth="1.4" strokeDasharray="2 1.2" />
        </Svg>
      </div>
      <Svg w={25} h={26} className="mt-[3px] ml-[38px]">
        <path d="M5 24.5H.6V.6H11L17.5 7.5V10M11 .6V7.5H17.5" stroke="#252423" strokeWidth="1.2" fill="#fff" />
        <path d="M24 9.5L15 20.5L13 18.5L22.5 9Z" stroke="#252423" strokeWidth="1.2" fill="#fff" />
        <path d="M14.5 21C13.5 24.5 10 25 6.5 24.5C9.5 23 9 19.5 12.5 19Z" stroke="#252423" strokeWidth="1.2" fill="#c8c6c4" />
      </Svg>
    </div>
    <Svg w={180} h={14} className="mt-px">
      <path d="M0 11.5H16.5L24.5 4.5L32.5 11.5H180" stroke="#a19f9d" strokeWidth="1.2" />
    </Svg>
    <div className="grid h-[203px] auto-rows-[28px] grid-cols-[repeat(6,28px)] pt-[9px] pl-[11px]">
      {visuals.map((v, i) => (
        <div key={i} className={i === 2 || i === 3 ? "h-[20px] w-[20px] bg-[#c8c6c4]/60" : ""}>
          <Svg w={18} h={18}>{v}</Svg>
        </div>
      ))}
    </div>
    <div className="border-t border-[#d8d6d4] pr-[6px] pl-[4px]">
      <div className="h-[30px] pl-[8px] text-[11.5px] leading-[35px] tracking-[-0.2px]">Values</div>
      <div className="h-7 rounded-[2px] border border-dashed border-[#c8c6c4] bg-white pl-[10px] text-[11.5px] leading-[28px] tracking-[-0.05px]">Add data fields here</div>
      <div className="mt-[7px] h-6 pl-[8px] text-[11.5px] leading-[24px] font-medium">Tooltip</div>
      <div className="flex h-[26px] items-center pr-[16px] pl-[8px] text-[11.5px]">
        <span className="tracking-[-0.08px]">Keep all filters</span>
        <span className="ml-auto flex h-4 w-8 items-center justify-between rounded-full bg-[#117865] px-[4px] text-[9px] font-semibold text-white">
          On
          <i className="h-2 w-2 rounded-full bg-white" />
        </span>
      </div>
      <div className="mt-[5px] h-[26px] rounded-[2px] border border-dashed border-[#c8c6c4] bg-white pl-[8px] text-[11.5px] leading-[26px] tracking-[-0.05px]">Drag tooltip fields here</div>
    </div>
  </div>
);

const DataPane = () => (
  <div className="flex-1 bg-[#f3f2f1] text-[12px] text-[#484644]">
    <div className="flex h-[38px] items-center pr-[8px] pl-[8px] text-[15px] font-semibold text-[#252423]">
      Data
      <Chevrons className="ml-auto" />
    </div>
    <div className="mt-[7px] mr-[4px] ml-[4px] flex h-[27px] items-center rounded-[2px] border border-[#605e5c] text-[12.7px] text-[#605e5c]">
      <Svg w={14} h={14} className="mr-[7px] ml-[7px]">
        <path d="M.6 13.4L5 9" stroke="#605e5c" />
        <circle cx="8.7" cy="5.2" r="4.6" stroke="#605e5c" />
      </Svg>
      Search
    </div>
    <div className="mt-[10px] text-[11.6px] tracking-[-0.05px]">
      {["New Measure", "HR Analytics Data", "HR employee data"].map((t, i) => (
        <div key={t} className="flex h-6 items-center pl-[10px]">
          <Svg w={6} h={12}><path d="M.7 .7L5.5 6L.7 11.3" stroke="#797775" /></Svg>
          <Svg w={13} h={14} className="mr-[5px] ml-[7px]">
            {i === 0 ? (
              <g stroke="#3b3a39">
                <rect x=".6" y=".6" width="9.8" height="11.8" rx="2" strokeWidth="1.2" />
                <path d="M12.5 3V11.5C12.5 13 11.5 13.8 10 13.8H3.5M3 3.5H8" strokeWidth="1.2" />
                <path d="M3 6.5H4.2M5 6.5H6.2M7 6.5H8.2M3 9.5H4.2M5 9.5H6.2M7 9.5H8.2" strokeWidth="1.4" />
              </g>
            ) : (
              <path d="M2.5 1.1H10.5A1.9 1.9 0 0 1 12.4 3V11A1.9 1.9 0 0 1 10.5 12.9H2.5A1.9 1.9 0 0 1 .6 11V3A1.9 1.9 0 0 1 2.5 1.1ZM.6 5H12.4M.6 9H12.4M4.5 1.1V12.9M8.5 1.1V12.9" stroke="#3b3a39" strokeWidth="1.2" />
            )}
          </Svg>
          {t}
        </div>
      ))}
    </div>
  </div>
);

const StatusBar = () => (
  <div className="flex h-[24px] items-center border-t border-[#e1dfdd] bg-[#f3f2f1] pr-[19px] pl-[5px] text-[11.5px] text-[#605e5c]">
    <span>Page 2 of 3</span>
    <Svg w={118} h={14} className="ml-auto">
      <path d="M0 7.5H4" stroke="#3b3a39" strokeWidth="1.4" />
      <path d="M9 7H109" stroke="#605e5c" />
      <rect x="41" y="1.5" width="4" height="11" fill="#605e5c" />
      <path d="M58.5 4.5V9.5" stroke="#605e5c" />
      <path d="M115 7H123M119 3V11" stroke="#605e5c" strokeWidth="1.2" />
    </Svg>
    <span className="ml-[21px] w-[23px] text-[11.8px] tracking-[-0.3px]">71%</span>
    <Svg w={16} h={12} className="ml-[16px]">
      <rect x=".6" y=".6" width="14.8" height="10.8" stroke="#605e5c" strokeWidth="1.2" />
      <path d="M3 5V3H5.5M10.5 3H13V5M13 7V9H10.5M5.5 9H3V7" stroke="#605e5c" />
    </Svg>
  </div>
);

const apps: { w: number; h: number; run?: boolean; active?: boolean; art: React.ReactNode }[] = [
  { w: 22, h: 22, art: <><circle cx="11" cy="11" r="10.8" fill="#2aa1da" /><path d="M4 11L17 5.5L15 16.5L10.5 13.5L8.5 15.5L8 12Z" fill="#fff" /></> },
  { w: 22, h: 22, art: <><path d="M12 .5C5 3 2 5 1.500 10V16L8 19.500V10C8 8 9 7 13 5Z" fill="#8d7ae6" /><path d="M12 .5C15 1 19 4 20.500 6V13C20 15 18 16 14 15.500V9.500L7.500 6.500C8 3 10 1 12 .5Z" fill="#4fc0f5" /><path d="M1.500 16C3 19.500 8 22 11 21.500C15 20 19 17.500 20.500 13C18 15.500 15 16 12 17.500C9 19 5 18.500 1.500 16Z" fill="#c68be6" /><path d="M8 9L11 7.500L14 9V13.500L11 15.500L8 14Z" fill="#24242a" /></> },
  { w: 20, h: 24, art: <g stroke="#2bb673" strokeWidth="4.5"><circle cx="10" cy="7.2" r="4.8" /><circle cx="10" cy="16.8" r="5.3" /></g> },
  { w: 22, h: 20, run: true, art: <><path d="M0 1H9L10.5 3H0Z" fill="#d99a0b" /><rect y="2.5" width="22" height="16.5" fill="#ffd667" /><rect y="1" width="9.5" height="3" fill="#e6a417" /><path d="M4.5 19V11H17.5V19H14V15H8V19Z" fill="#3b9be0" /></> },
  { w: 16, h: 21, art: <><path d="M0 0H12L16 4V21H0Z" fill="#f5f5f5" /><path d="M11.5 0V4.5H16" fill="#c8c8c8" stroke="#777" strokeWidth=".7" /></> },
  { w: 21, h: 20, art: <><rect x="4" width="16" height="18" rx="1" fill="#4a86b4" /><rect x="1" y="1" width="17" height="18" rx="1" fill="#a4cde6" /><path d="M18 2L20.5 0V17L18 19Z" fill="#dff0fa" /><circle cx="9" cy="9.5" r="6.8" fill="#f07522" /><path d="M7 5.5L13 9.5L7 13.5Z" fill="#fff" /></> },
  { w: 22, h: 22, art: <><path d="M0 2L3 0H22V21H0Z" fill="#e9f4ea" stroke="#6bb56f" /><path d="M12 3H20V12H12M12 6H20M12 9H20M16 3V12" stroke="#8cc890" /><path d="M3 3L14 17M13 2L3 17" stroke="#1f8a3b" strokeWidth="3.6" /><path d="M11 15L21 11L22 20L13 21Z" fill="#fff" stroke="#9cc" strokeWidth=".6" /></> },
  { w: 20, h: 24, active: true, run: true, art: <><rect x="10" width="9.5" height="24" rx="1" fill="#d99407" /><rect x="5" y="6" width="9.5" height="18" rx="1" fill="#efb92e" /><rect y="12" width="9.5" height="12" rx="1" fill="#f7d35a" /></> },
  { w: 22, h: 22, art: <><rect width="22" height="22" fill="#f3f3f3" /><g stroke="#3f6d96" strokeWidth="1.2"><path d="M11 7.5V14.5M7.5 11H14.5" strokeWidth="1.6" /><path d="M11 1.5V5M9.3 3.2H12.7M11 17V20.5M9.3 18.8H12.7M1.5 11H5M3.2 9.3V12.7M17 11H20.5M18.8 9.3V12.7M5.8 4V8M3.8 6H7.8M16.2 4V8M14.2 6H18.2M5.8 14V18M3.8 16H7.8M16.2 14V18M14.2 16H18.2" /></g></> },
  { w: 22, h: 22, art: <><path d="M2 2V14C2 17 13 17 13 14V2Z" fill="#f0b429" /><ellipse cx="7.5" cy="2" rx="5.5" ry="2.3" fill="#ffd978" /><path d="M17 0H21V5M0 16V21H6" stroke="#3f9a3f" strokeWidth="2" /><path d="M11 13L20 21M20 12L11 21" stroke="#e0701c" strokeWidth="2.4" /><path d="M9.500 12.500L14 10.500M17 11L21.500 13" stroke="#e0701c" strokeWidth="2" /></> },
  { w: 24, h: 24, run: true, art: <><rect width="24" height="24" fill="#ffde02" /><text x="12" y="13.800" textAnchor="middle" fontSize="5" fontWeight="800" fill="#222" fontFamily="Inter">exness</text></> },
  { w: 23, h: 23, run: true, art: <><path d="M11.5 1L14 4L16.5 .5C17 4 22.5 6 22.5 12.5A11 11 0 0 1 .5 12.5C.5 8 2 6 3.5 3.5L5.5 6.5C7 4.5 10 4.5 11.5 1Z" fill="#ff7b1c" /><path d="M16.5 .5C17 4 22.5 6 22.5 12.5C22.5 16 21 19 18 21C19 14 18.5 8 14 4Z" fill="#ffc32b" /><path d="M1 14A11 11 0 0 0 18 21.5C13 22.5 6 20 4 14Z" fill="#f2347a" /><circle cx="12" cy="12.5" r="5" fill="#7a45e0" /><path d="M6 8C9 7 12 8 13 10C10 10 9 12 6.5 11.5Z" fill="#ff9a2a" /></> },
  { w: 25, h: 25, run: true, art: <><circle cx="12.5" cy="12.5" r="11" fill="#2b2b2f" stroke="url(#ring)" strokeWidth="2" /><path d="M10 7L18 12.5L10 18Z" fill="#fff" /><defs><linearGradient id="ring" x1="0" y1="0" x2="0" y2="1"><stop offset="0" stopColor="#f29148" /><stop offset="1" stopColor="#9a6bd0" /></linearGradient></defs></> },
];

const Taskbar = () => (
  <div className="flex h-[41px] items-center border-t border-black bg-[linear-gradient(to_right,#2b2822_0%,#262523_30%,#222226_45%,#1c2136_54%,#22232a_62%,#262421_75%,#32231e_92%,#2b2320_100%)] text-white">
    <div className="flex w-[48px] shrink-0 justify-center">
      <Svg w={16} h={16}><path d="M0 2.2L6.8 1.2V7.5H0ZM7.8 1L16 0V7.5H7.8ZM0 8.5H6.8V14.8L0 13.8ZM7.8 8.5H16V16L7.8 15Z" fill="#fff" /></Svg>
    </div>
    <div className="flex h-10 w-[288px] shrink-0 items-center border border-[#c8c8c8] bg-[#f2f2f2] text-[14px] text-[#3b3a39]">
      <Svg w={17} h={17} className="mr-[11px] ml-[11px]">
        <path d="M.6 16.4L6.5 10.3" stroke="#201f1e" strokeWidth="1.4" />
        <circle cx="10.8" cy="6" r="5.3" stroke="#201f1e" strokeWidth="1.4" />
      </Svg>
      <span className="tracking-[-0.05px]">Type here to search</span>
      <Svg w={33} h={37} className="mr-[25px] ml-auto">
        <path d="M14 0L29 4L25 17L10 14Z" fill="#d4d4dc" />
        <path d="M17 7L19.5 9.5L23.5 5.5" stroke="#3fae2a" strokeWidth="2" />
        <path d="M1 16L9 12L10 14L25 17L27 13.500L32 14L25 19Z" fill="#a81e22" />
        <path d="M1 16L23 18V36L2 36Z" fill="#f4f4f6" />
        <path d="M23 18L32 14V32L23 36Z" fill="#d8d8e0" />
        <path d="M1 16L23 18V22.500L1 20.500ZM1 24L23 26V29.500L1 27.500ZM23 18L32 14V18L23 22.500ZM23 26L32 22V26L23 29.500Z" fill="#e02b2f" />
        <path d="M1 30.500L23 32.500V37H2ZM23 32.500L32 28V33L23 37Z" fill="#2b4fae" />
        <path d="M5 33.5H6.5M11 34H12.5M17 34.5H18.5M26 33.500H27.500" stroke="#fff" strokeWidth="1.5" />
      </Svg>
    </div>
    <div className="w-[50.5px] shrink-0 pl-[16px]">
      <Svg w={16} h={16}><path d="M.5 0V2.500H10.5V0M.5 16V13.5H10.5V16M.5 4.5H10.5V11.5H.5ZM14 0V3M14 8V16" stroke="#fff" strokeWidth="1.2" /><rect x="12.5" y="4" width="3" height="3" fill="#fff" /></Svg>
    </div>
    {apps.map((a, i) => (
      <div key={i} className={`relative flex h-10 shrink-0 items-center justify-center ${i < 5 ? "w-[47px]" : "w-[46px]"} ${a.active ? "bg-[#50566e]" : ""}`}>
        <Svg w={a.w} h={a.h}>{a.art}</Svg>
        {a.run && <i className={`absolute bottom-0 h-[2px] bg-[#76b9ed] ${a.active ? "w-full" : "w-[38px]"}`} />}
      </div>
    ))}
    <Svg w={24} h={16} className="ml-[26px]">
      <path d="M.6 .6H20.5V14.9H2.5A1.9 1.9 0 0 1 .6 13ZM20.5 3.5H23.4V13A1.9 1.9 0 0 1 20.5 14.5" stroke="#fff" strokeWidth="1.2" />
      <path d="M3 4H18M12 7.5H18M12 10H18M12 12.5H18" stroke="#fff" strokeWidth="1.2" />
      <rect x="3.6" y="7.5" width="6" height="5" stroke="#fff" strokeWidth="1.3" />
    </Svg>
    <span className="ml-[8px] w-[55px] text-[14px] tracking-[-0.5px]">33°C</span>
    <Svg w={12} h={7}><path d="M.7 6.3L6 1L11.3 6.3" stroke="#fff" strokeWidth="1.2" /></Svg>
    <Svg w={12} h={16} className="ml-[13px]">
      <path d="M.6 4.6H8V11.4H.6ZM8 7L11.4 5V11L8 9M2 2.500C4 .5 7 .5 9 2.5M2 13.5C4 15.5 7 15.5 9 13.5" stroke="#fff" strokeWidth="1.2" />
    </Svg>
    <Svg w={17} h={13} className="ml-[9px]">
      <path d="M3 12A3.5 3.5 0 0 1 3 6A5 5 0 0 1 11.5 4.5A4 4 0 0 1 14.500 12Z" fill="#8a8886" />
      <path d="M2 0L15.5 12.5" stroke="#fff" strokeWidth="1.3" />
    </Svg>
    <Svg w={16} h={13} className="ml-[8px]">
      <path d="M.5 2H13.500V10H.5ZM14 4.500V7.500" stroke="#fff" strokeWidth="1.2" /><rect x="2" y="3.5" width="7" height="5" fill="#fff" />
      <circle cx="10.5" cy="9" r="4.6" fill="#10893e" /><path d="M10.5 6.500V11.500M9 10V7.500L10.5 6L12 7.500V10Z" stroke="#fff" strokeWidth=".9" />
    </Svg>
    <Svg w={17} h={13} className="ml-[7px]">
      <path d="M.6 4.5H3L6.5 1V12L3 8.5H.6ZM8.5 4C9.8 5.5 9.8 7.5 8.5 9M11 2C13.5 4.5 13.5 8.5 11 11M13.5 .5C17 4 17 9 13.5 12.5" stroke="#fff" strokeWidth="1.1" />
    </Svg>
    <Svg w={23} h={13} className="ml-[7px]">
      <rect x=".6" y=".6" width="21.8" height="11.8" stroke="#fff" strokeWidth="1.2" />
      <path d="M3 3.5H20M3 6.5H20" stroke="#fff" strokeWidth="1.3" strokeDasharray="1.5 1.2" /><path d="M5 9.5H18" stroke="#fff" strokeWidth="1.2" />
    </Svg>
    <div className="ml-[10px] w-[53px] text-center text-[11.6px] leading-[18px] tracking-[-0.25px] whitespace-nowrap">
      <div>2:26 PM</div>
      <div>3/11/2024</div>
    </div>
    <Svg w={24} h={24} className="mt-[5px] ml-[18px]">
      <path d="M0 .5H16.5V14H6L3.5 17V14H0Z" fill="#fff" />
      <path d="M3 4H13.5M3 7H13.5M3 10H9" stroke="#33261f" strokeWidth="1.2" />
      <circle cx="16" cy="15" r="8" fill="#3b3735" stroke="#9a9694" />
      <text x="16" y="19" textAnchor="middle" fontSize="11.5" fill="#fff" fontFamily="Open Sans">1</text>
    </Svg>
    <div className="mr-[4px] ml-auto h-10 w-px bg-[#6b615c]" />
  </div>
);

export default function App() {
  return (
    <div className="flex h-[768px] w-[1366px] flex-col overflow-hidden bg-white font-['Open_Sans','Noto_Sans',sans-serif]">
      <TitleBar />
      <Ribbon />
      <div className="flex h-[543px]">
        <NavRail />
        <div className="w-[930px] shrink-0">
          <Canvas />
          <SheetTabs />
        </div>
        <FiltersPane />
        <VizPane />
        <DataPane />
      </div>
      <StatusBar />
      <Taskbar />
    </div>
  );
}
